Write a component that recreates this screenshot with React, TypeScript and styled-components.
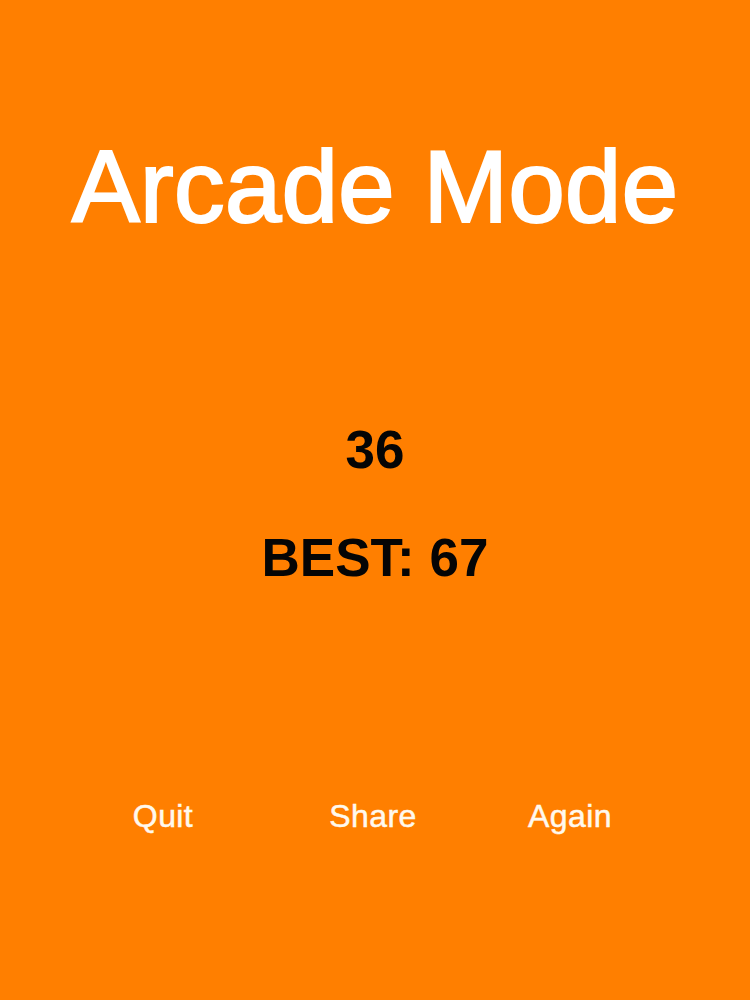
import { FC } from 'react';
import styled, { createGlobalStyle } from 'styled-components';

const GlobalStyle = createGlobalStyle`
  html, body {
    margin: 0;
    padding: 0;
    background: #ff7f00;
  }
  body {
    font-family: 'Liberation Sans', Arial, Helvetica, sans-serif;
  }
`;

const Screen = styled.div`
  display: flex;
  flex-direction: column;
  align-items: center;
  width: 750px;
  height: 1000px;
  background: #ff7f00;
`;

const Title = styled.h1`
  margin: 136px 0 0;
  font-size: 102px;
  line-height: 1;
  font-weight: 400;
  color: #fff;
  -webkit-text-stroke: 2px #fff;
`;

const Score = styled.div<{ $gap: number }>`
  margin-top: ${(p) => p.$gap}px;
  font-size: 53px;
  line-height: 1;
  font-weight: 700;
  color: #050505;
`;

const Actions = styled.div`
  display: grid;
  grid-template-columns: 220px 200px 194px;
  justify-items: center;
  align-self: stretch;
  margin-top: 216px;
  padding-left: 53px;
`;

const Action = styled.button`
  padding: 0;
  border: none;
  background: none;
  font-family: inherit;
  font-size: 32px;
  line-height: 1;
  letter-spacing: 0.4px;
  color: #fff9ee;
  -webkit-text-stroke: 0.5px #fff9ee;
  cursor: pointer;
`;

const App: FC = () => {
  return (
    <>
      <GlobalStyle />
      <Screen>
        <Title>Arcade Mode</Title>
        <Score $gap={185}>36</Score>
        <Score $gap={55}>BEST: 67</Score>
        <Actions>
          <Action>Quit</Action>
          <Action>Share</Action>
          <Action>Again</Action>
        </Actions>
      </Screen>
    </>
  );
};

export default App;
